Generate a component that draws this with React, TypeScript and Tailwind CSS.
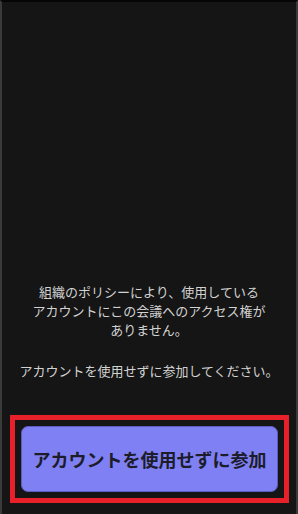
export default function App() {
  return (
    <div
      className="flex h-[514px] w-[298px] flex-col border-x-2 border-t-2 border-x-[#3a3a3a] border-t-[#050505] bg-[#151515]"
      style={{ fontFamily: '"Noto Sans CJK JP", "Noto Sans", sans-serif' }}
    >
      <div className="flex-1" />

      <div className="px-4 text-center text-[13px] leading-[19px] text-[#d2d2d2]">
        <p>
          組織のポリシーにより、使用している
          <br />
          アカウントにこの会議へのアクセス権が
          <br />
          ありません。
        </p>
        <p className="mt-[22px]">アカウントを使用せずに参加してください。</p>
      </div>

      <div className="mt-[35px] mb-[11px] ml-[8px] mr-[7px] border-[5px] border-[#e8202a] p-[6px]">
        <button
          type="button"
          className="flex h-[66px] w-full items-center justify-center rounded-[7px] border border-[#5c5cc0] bg-[#7f80f4] text-[18px] font-bold text-[#1c1c2a]"
        >
          アカウントを使用せずに参加
        </button>
      </div>
    </div>
  );
}
